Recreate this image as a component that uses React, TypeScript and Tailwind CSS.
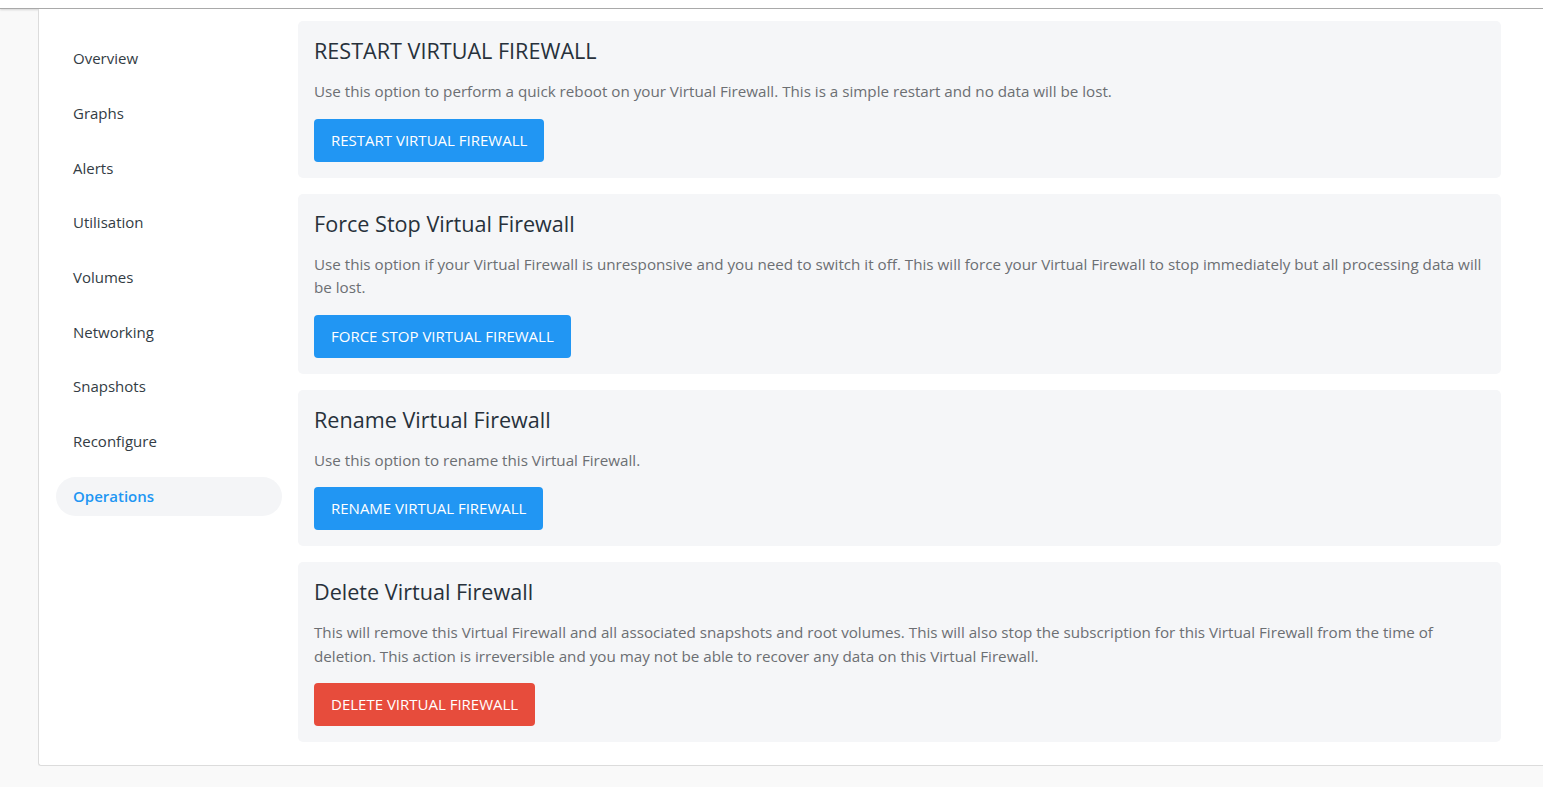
import React from 'react'

const navItems = [
  'Overview',
  'Graphs',
  'Alerts',
  'Utilisation',
  'Volumes',
  'Networking',
  'Snapshots',
  'Reconfigure',
  'Operations',
]

const sections = [
  {
    title: 'RESTART VIRTUAL FIREWALL',
    text: 'Use this option to perform a quick reboot on your Virtual Firewall. This is a simple restart and no data will be lost.',
    button: 'RESTART VIRTUAL FIREWALL',
    danger: false,
  },
  {
    title: 'Force Stop Virtual Firewall',
    text: 'Use this option if your Virtual Firewall is unresponsive and you need to switch it off. This will force your Virtual Firewall to stop immediately but all processing data will be lost.',
    button: 'FORCE STOP VIRTUAL FIREWALL',
    danger: false,
  },
  {
    title: 'Rename Virtual Firewall',
    text: 'Use this option to rename this Virtual Firewall.',
    button: 'RENAME VIRTUAL FIREWALL',
    danger: false,
  },
  {
    title: 'Delete Virtual Firewall',
    text: 'This will remove this Virtual Firewall and all associated snapshots and root volumes. This will also stop the subscription for this Virtual Firewall from the time of deletion. This action is irreversible and you may not be able to recover any data on this Virtual Firewall.',
    button: 'DELETE VIRTUAL FIREWALL',
    danger: true,
  },
]

const App: React.FC = () => {
  const active = 'Operations'

  return (
    <div className="min-h-screen bg-[#f9f9f9] font-['Open_Sans',sans-serif]">
      {/* Header edge */}
      <div className="h-[9px] bg-white border-b border-[#a9a9a9] shadow-[0_1px_2px_rgba(0,0,0,0.15)]" />

      <div className="pl-[38px]">
        <div className="flex bg-white border-l border-b border-[#dcdcdc] rounded-bl-[3px] pt-[12px] pb-[23px] pl-[17px] pr-[42px]">
          {/* Side nav */}
          <nav className="w-[226px] shrink-0 pt-[18px] flex flex-col gap-[15.7px]">
            {navItems.map((item) => (
              <div
                key={item}
                className={`h-[39px] flex items-center px-[17px] rounded-full text-[15px] ${
                  item === active ? 'bg-[#f4f5f7] text-[#2196f3] font-semibold' : 'text-[#333c44]'
                }`}
              >
                {item}
              </div>
            ))}
          </nav>

          {/* Operations */}
          <div className="flex-1 ml-[16px] flex flex-col gap-[16px]">
            {sections.map((s) => (
              <div key={s.title} className="bg-[#f5f6f8] rounded-[5px] px-[16px] pt-[17px] pb-[16px]">
                <h2 className="text-[21.6px] leading-[26px] text-[#27313b] mb-[16px]">{s.title}</h2>
                <p className="text-[15.2px] leading-[23.5px] text-[#6c6f73] mb-[15px]">{s.text}</p>
                <button
                  type="button"
                  className={`h-[43px] px-[17px] rounded-[4px] text-white text-[15px] font-medium ${
                    s.danger ? 'bg-[#e74c3c]' : 'bg-[#2196f3]'
                  }`}
                >
                  {s.button}
                </button>
              </div>
            ))}
          </div>
        </div>
      </div>
    </div>
  )
}

export default App
